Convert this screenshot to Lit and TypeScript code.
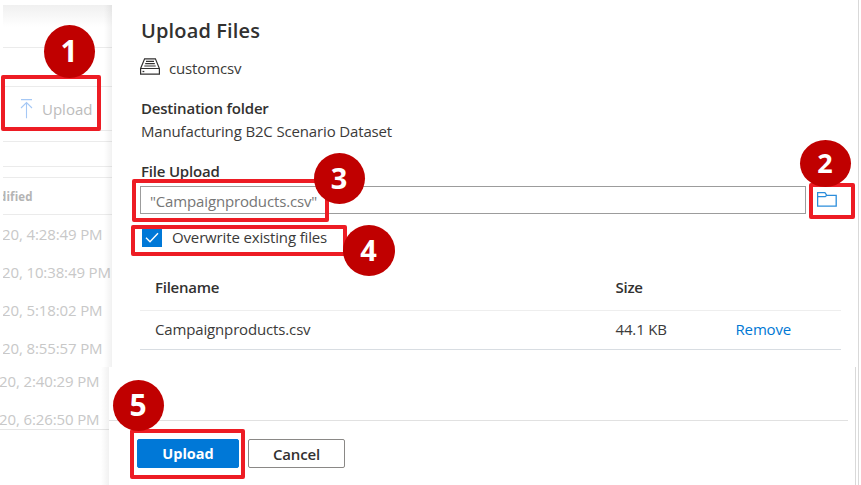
import { LitElement, html, css } from "lit";
import { customElement } from "lit/decorators.js";
import { styleMap } from "lit/directives/style-map.js";

interface Box { x: number; y: number; w: number; h: number; }
interface Badge extends Box { n: number; size: number; }

const frames: Box[] = [
  { x: 1, y: 75, w: 100, h: 56 },
  { x: 809, y: 183, w: 46, h: 36 },
  { x: 132, y: 179, w: 197, h: 43 },
  { x: 131, y: 225, w: 216, h: 31 },
  { x: 130, y: 429, w: 115, h: 50 },
];

const badges: Badge[] = [
  { n: 1, x: 44, y: 25, w: 51, h: 53, size: 30 },
  { n: 2, x: 800, y: 140, w: 51, h: 47, size: 27 },
  { n: 3, x: 314, y: 153, w: 51, h: 51, size: 29 },
  { n: 4, x: 343, y: 225, w: 52, h: 51, size: 29 },
  { n: 5, x: 113, y: 380, w: 51, h: 51, size: 30 },
];

const place = (b: Box) => styleMap({
  left: `${b.x}px`, top: `${b.y}px`, width: `${b.w}px`, height: `${b.h}px`,
});

@customElement("app-root")
export class AppRoot extends LitElement {
  static styles = css`
    :host {
      display: block; position: relative; width: 861px; height: 485px; overflow: hidden;
      background: #fff; color: #3b3a39;
      font: 400 15px/20px "Open Sans", "Noto Sans", sans-serif;
      white-space: nowrap;
    }
    * { box-sizing: border-box; }
    svg { display: block; flex: none; }
    .page { display: grid; grid-template-rows: 367px 118px; width: 859px; border-right: 1px solid #d9d9d9; }
    .upper { display: grid; grid-template-columns: 112px 1fr; min-width: 0; }
    .lower { display: grid; grid-template-columns: 109px 1fr; min-width: 0; margin-right: 2px; border-right: 1px solid #d9d9d9; }

    .behind { position: relative; overflow: hidden; color: #c8c8c8; }
    .behind::after {
      content: ""; position: absolute; inset: 0 0 0 auto; width: 8px;
      background: linear-gradient(to right, rgba(0,0,0,0), rgba(0,0,0,.055));
    }
    .upper .behind { margin: 5px 0 0 3px; }
    .band { border-bottom: 1px solid #ebebeb; display: flex; align-items: center; }
    .b1 { height: 43px; background: linear-gradient(#f0f0f0, #fff 22px); }
    .b2 { height: 39px; }
    .b3 { height: 44px; }
    .b4 { height: 11px; }
    .b5 { height: 25px; }
    .b6 { height: 11px; }
    .b7 { height: 37px; padding-top: 1px; font-size: 11.5px; font-weight: 700; color: #b4b4b4; }
    .b7 span { margin-left: -4px; letter-spacing: .15px; }
    .command { display: flex; align-items: center; gap: 7px; margin-left: 17px; color: #bcbcbc; letter-spacing: 0; }
    .date { height: 38px; line-height: 38px; font-size: 15px; letter-spacing: -.12px; margin-left: -1px; }
    .lower .date:first-child { height: 34px; line-height: 29px; }
    .lower .date:nth-child(2) { height: 29px; line-height: 37px; border-bottom: 1px solid #e6e6e6; }

    .panel { display: flex; flex-direction: column; padding: 19px 17px 0 29px; letter-spacing: -.15px; }
    h1 { margin: 0; font-size: 20px; line-height: 24px; font-weight: 600; letter-spacing: .14px; color: #323130; }
    .source { display: flex; align-items: center; gap: 9px; margin: 14px 0 0 -1px; height: 20px; }
    .source svg { margin-top: -1px; }
    .source span { padding-top: 2px; }
    .label { font-weight: 600; line-height: 23px; letter-spacing: -.2px; color: #323130; }
    .dest { margin-top: 20px; }
    .value { line-height: 23px; }
    .file { margin-top: 17px; }
    .field { display: flex; align-items: center; gap: 11px; margin-left: -1px; margin-top: 3px; }
    .input {
      width: 666px; height: 28px; border: 1px solid #9c9c9c; padding-left: 9px;
      color: #767676; line-height: 28px;
    }
    .field svg { margin-top: -1px; }
    .check { display: flex; align-items: center; gap: 10px; height: 20px; margin: 14px 0 0 0; padding-left: 1px; }
    .check span { margin-top: -2px; }
    .table { margin: 21px 0 0 -1px; }
    .row {
      display: grid; grid-template-columns: 460.5px 120px 1fr; align-items: center;
      padding: 0 0 2px 15px; height: 39px; border-bottom: 1px solid #d8dde2;
    }
    .head { height: 42px; font-weight: 600; border-color: #eeeeee; padding-bottom: 5px; letter-spacing: -.25px; color: #323130; }
    .link { color: #0078d4; }

    .footer { display: grid; grid-template-rows: 54px 1fr; }
    .rule { border-bottom: 1px solid #e1e1e1; margin-right: 7px; }
    .buttons { display: flex; gap: 9px; padding: 18px 0 0 28px; }
    .btn {
      height: 29px; width: 97px; border: 1px solid #8a8886; border-radius: 2px;
      font-weight: 600; display: flex; align-items: center; justify-content: center; letter-spacing: -.15px; color: #323130;
    }
    .primary {
      width: 102px; background: #0078d7; border-color: #0078d7; color: #fff;
      letter-spacing: 0; font-weight: 700; font-size: 14.5px; padding-top: 1px;
    }

    .frame { position: absolute; border: 4px solid #ed1c24; border-radius: 2px; }
    .badge {
      position: absolute; border-radius: 50%; background: #c00000; color: #fff; padding: 0 1px 2px 0;
      display: flex; align-items: center; justify-content: center; font-weight: 700; line-height: 1;
    }
  `;

  render() {
    return html`
      <div class="page">
        <div class="upper">
          <div class="behind">
            <div class="band b1"></div>
            <div class="band b2"></div>
            <div class="band b3">
              <div class="command">
                <svg width="15" height="20" viewBox="0 0 15 20" fill="none" stroke="#a5c8f5" stroke-width="1.1">
                  <path d="M1 .6h11M6.5 3.3v16M1 9 6.5 3.5 12 9" />
                </svg>
                <span>Upload</span>
              </div>
            </div>
            <div class="band b4"></div>
            <div class="band b5"></div>
            <div class="band b6"></div>
            <div class="band b7"><span>dified</span></div>
            ${["20, 4:28:49 PM", "20, 10:38:49 PM", "20, 5:18:02 PM", "20, 8:55:57 PM"].map(
              (d) => html`<div class="date">${d}</div>`)}
          </div>
          <div class="panel">
            <h1>Upload Files</h1>
            <div class="source">
              <svg width="20" height="17" viewBox="0 0 20 17" fill="none" stroke="#323130" stroke-width="1.2">
                <path d="M.6 10.5 4.6.8h10.800l4 9.700v5.700H.6zM.6 10.500h18.800M6 3.400h8M5.200 5.700h9.600M4.300 8h11.400" />
                <path d="M2.500 13.500h1.800" stroke-width="1.300" />
              </svg>
              <span>customcsv</span>
            </div>
            <div class="label dest">Destination folder</div>
            <div class="value">Manufacturing B2C Scenario Dataset</div>
            <div class="label file">File Upload</div>
            <div class="field">
              <div class="input">"Campaignproducts.csv"</div>
              <svg width="20" height="15" viewBox="0 0 20 15" fill="none" stroke="#2b8ddb" stroke-width="1.3">
                <path d="M.6 14.200V.700h7.300l1.900 2.600h9.400v10.900zM.6 4.700h7.600l1.600-1.400" />
              </svg>
            </div>
            <div class="check">
              <svg width="20" height="20" viewBox="0 0 20 20">
                <path d="M0 0h20v19H0z" fill="#0078d7" />
                <path d="M4 9.800l4 4 8-8.600" fill="none" stroke="#fff" stroke-width="1.4" />
              </svg>
              <span>Overwrite existing files</span>
            </div>
            <div class="table">
              <div class="row head"><span>Filename</span><span>Size</span></div>
              <div class="row">
                <span>Campaignproducts.csv</span><span>44.1 KB</span><span class="link">Remove</span>
              </div>
            </div>
          </div>
        </div>
        <div class="lower">
          <div class="behind">
            <div class="date">20, 2:40:29 PM</div>
            <div class="date">20, 6:26:50 PM</div>
          </div>
          <div class="footer">
            <div class="rule"></div>
            <div class="buttons">
              <div class="btn primary">Upload</div>
              <div class="btn">Cancel</div>
            </div>
          </div>
        </div>
      </div>
      ${frames.map((f) => html`<div class="frame" style=${place(f)}></div>`)}
      ${badges.map((b) => html`
        <div class="badge" style=${styleMap({
          left: `${b.x}px`, top: `${b.y}px`, width: `${b.w}px`, height: `${b.h}px`, fontSize: `${b.size}px`,
        })}>${b.n}</div>`)}
    `;
  }
}
